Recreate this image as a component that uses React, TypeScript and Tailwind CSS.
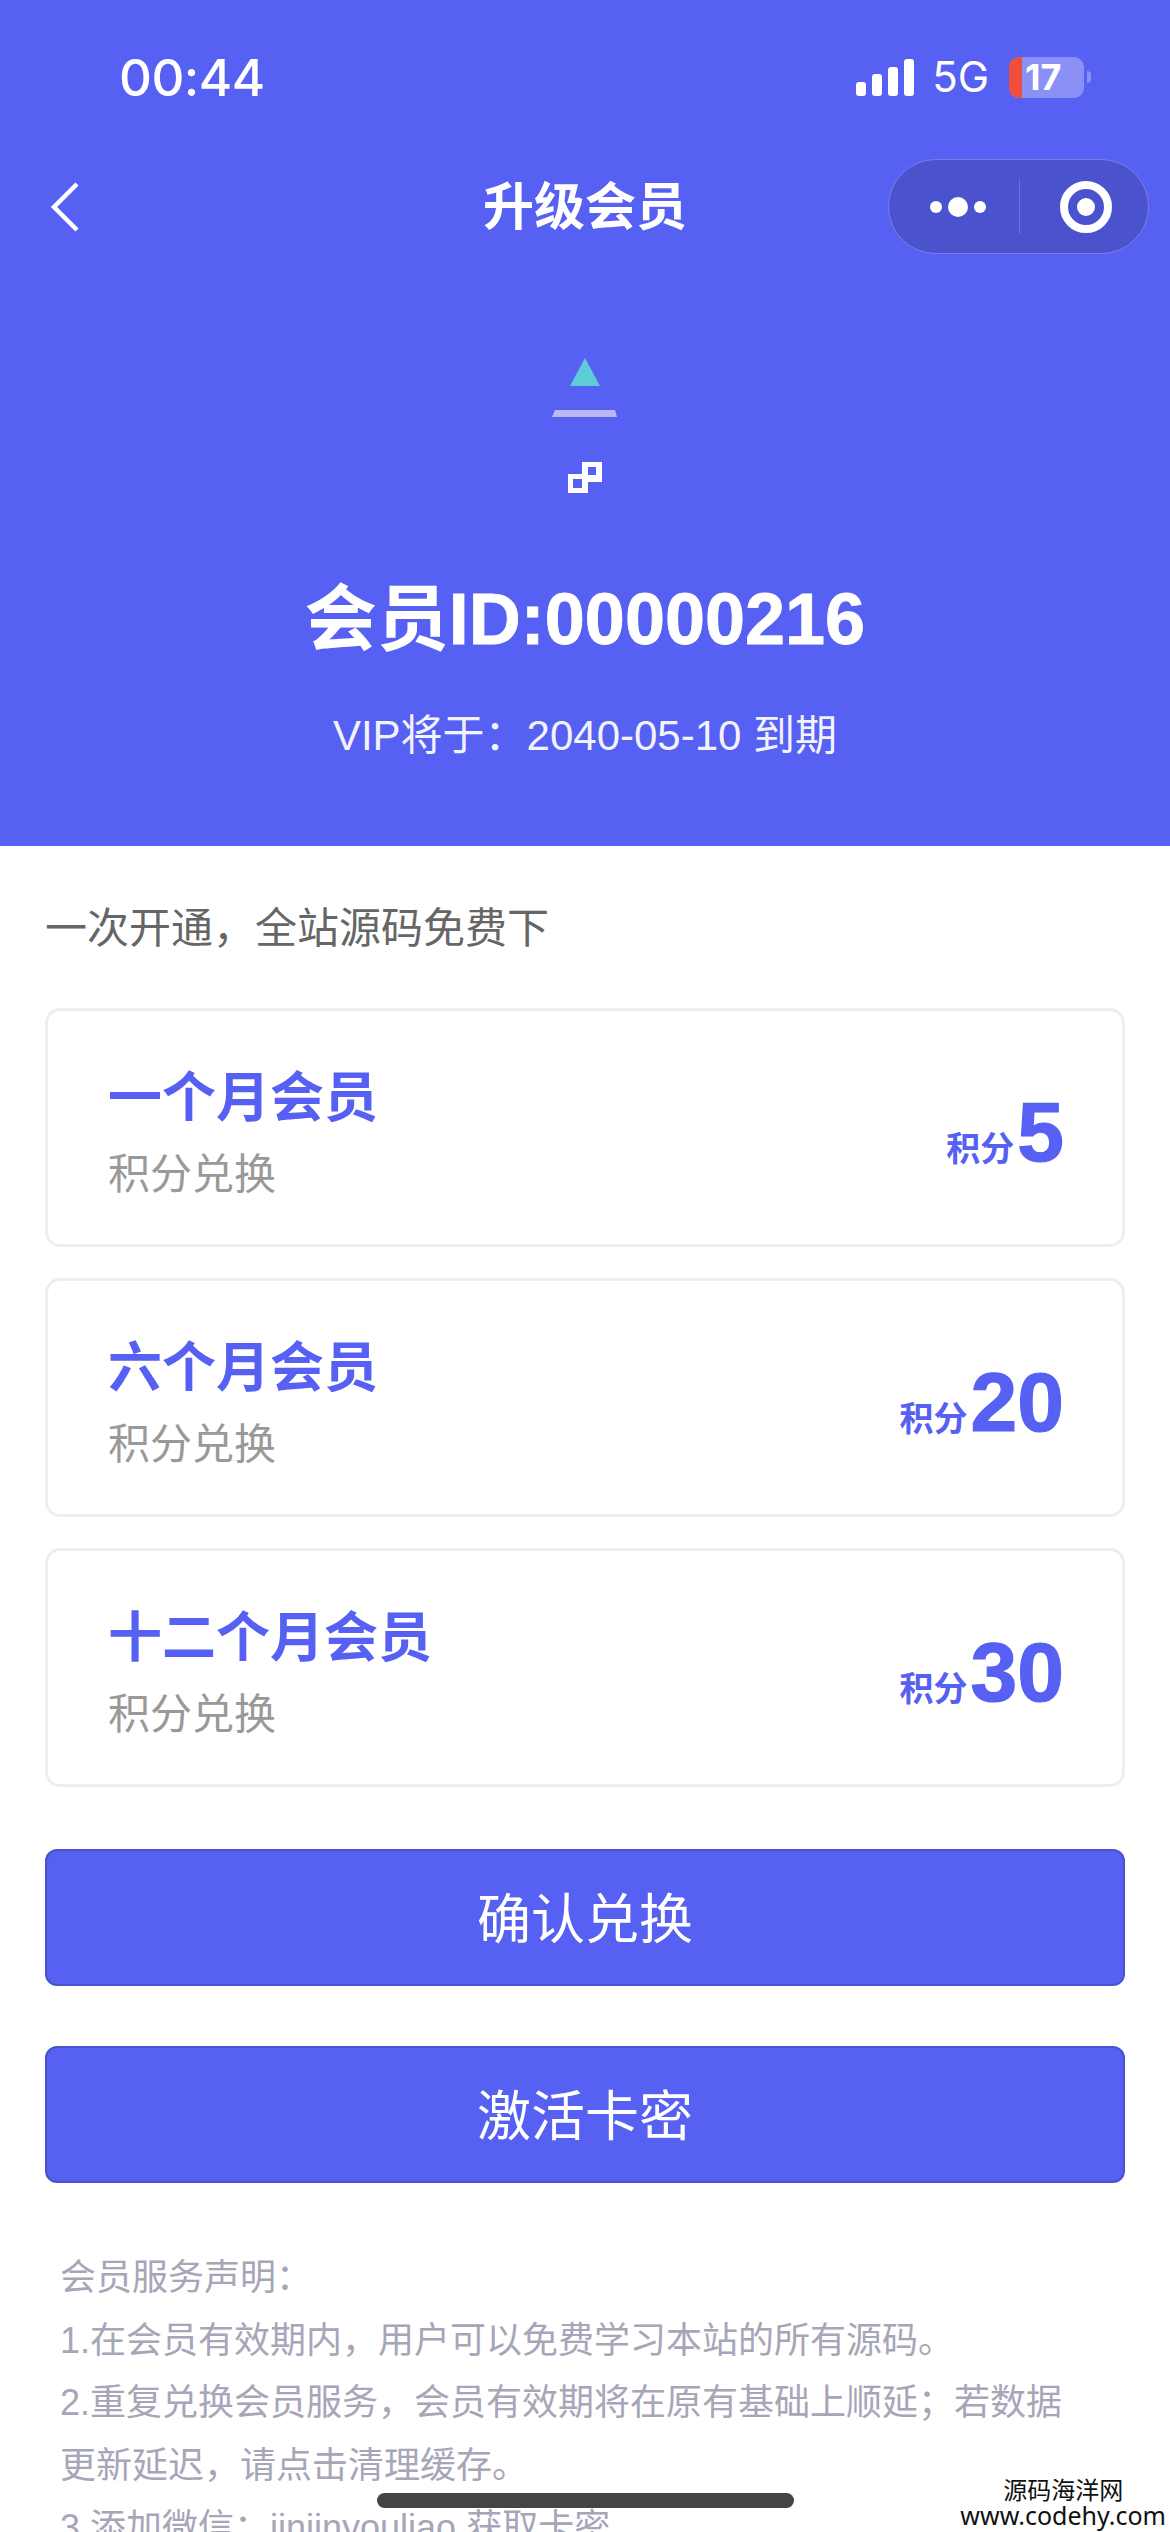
import React from 'react';

const plans = [
  { name: '一个月会员', points: '5' },
  { name: '六个月会员', points: '20' },
  { name: '十二个月会员', points: '30' },
];

const notes = [
  '会员服务声明：',
  '1.在会员有效期内，用户可以免费学习本站的所有源码。',
  '2.重复兑换会员服务，会员有效期将在原有基础上顺延；若数据',
  '更新延迟，请点击清理缓存。',
  '3.添加微信：jinjinyouliao 获取卡密',
];

const font = "font-['Liberation_Sans','Noto_Sans_CJK_SC',sans-serif]";

const StatusBar = () => (
  <div className="flex h-[159px] items-start justify-between pl-[119px] pr-[79px] pt-[51px]">
    <span className="font-['Inter',sans-serif] text-[51px] leading-[54px] font-medium tracking-[-0.5px] text-white">00:44</span>
    <div className="flex items-center pt-[5px]">
      <svg width="58" height="37" viewBox="0 0 58 37" fill="#fff">
        <rect x="0" y="23" width="10" height="14" rx="3" />
        <rect x="16" y="15" width="10" height="22" rx="3" />
        <rect x="32" y="8" width="10" height="29" rx="3" />
        <rect x="48" y="0" width="10" height="37" rx="3" />
      </svg>
      <span className="ml-[18px] mr-[20px] font-['Inter',sans-serif] text-[42px] leading-[42px] text-white">5G</span>
      <div className="flex items-center gap-[3px]">
        <div className="flex h-[41px] w-[75px] rounded-[10px] bg-[#8a90f6]">
          <div className="h-full w-[13px] rounded-l-[10px] bg-[#ee4e3a]" />
          <span className="ml-[3px] font-['Inter',sans-serif] text-[36px] leading-[41px] font-bold text-white">17</span>
        </div>
        <div className="h-[12px] w-[4px] rounded-r-full bg-[#8a90f6]" />
      </div>
    </div>
  </div>
);

const NavBar = () => (
  <div className="grid h-[95px] grid-cols-3 items-center">
    <div className="pl-[50px]">
      <svg width="30" height="50" viewBox="0 0 30 50" fill="none" stroke="#fff" strokeWidth="4.5">
        <path d="M27 2 L4 25 L27 48" />
      </svg>
    </div>
    <div className="pt-[2px] text-center text-[51px] leading-[60px] font-bold text-white">升级会员</div>
    <div className="flex justify-end pr-[21px]">
      <div className="flex h-[95px] w-[261px] items-center rounded-full border border-[#7a80e8] bg-[#4a52cd]">
        <div className="flex w-[130px] justify-center pl-[10px]">
          <svg width="58" height="20" viewBox="0 0 58 20" fill="#fff">
            <circle cx="6" cy="10" r="6" />
            <circle cx="28" cy="10" r="10" />
            <circle cx="50" cy="10" r="6" />
          </svg>
        </div>
        <div className="h-[55px] w-px bg-[#6a70e0]" />
        <div className="flex flex-1 justify-center pl-[4px]">
          <svg width="52" height="52" viewBox="0 0 52 52" fill="none">
            <circle cx="26" cy="26" r="22" stroke="#fff" strokeWidth="8" />
            <circle cx="26" cy="26" r="9" fill="#fff" />
          </svg>
        </div>
      </div>
    </div>
  </div>
);

const Logo = () => (
  <svg width="66" height="136" viewBox="0 0 66 136" fill="none" className="mx-auto">
    <path d="M33 0 L48 28 L18 28 Z" fill="#5fcbd6" />
    <path d="M3 52 L63 52 L65 59 L0 59 Z" fill="#bcb8f6" />
    <path fillRule="evenodd" d="M30 104 H50 V124 H30 Z M36 109 V117 H44 V109 Z" fill="#fff" />
    <path fillRule="evenodd" d="M16 116 H36 V135 H16 Z M21 121 V130 H30 V121 Z" fill="#fff" />
  </svg>
);

const PlanCard = ({ name, points }: { name: string; points: string }) => (
  <div className="flex h-[239px] items-center justify-between rounded-[15px] border-[3px] border-[#eeeeee] bg-white pl-[60px] pr-[58px]">
    <div className="pt-[10px]">
      <div className="text-[54px] leading-[64px] font-bold text-[#5660f2]">{name}</div>
      <div className="mt-[20px] text-[42px] leading-[50px] text-[#999999]">积分兑换</div>
    </div>
    <div className="flex items-baseline pt-[10px] text-[#5660f2]">
      <span className="mr-[3px] text-[34px] font-bold">积分</span>
      <span className="text-[84px] leading-[84px] font-bold [-webkit-text-stroke:1.2px_#5660f2]">{points}</span>
    </div>
  </div>
);

const ActionButton = ({ label }: { label: string }) => (
  <button className="h-[137px] w-full rounded-[12px] border-2 border-[#4a52cd] bg-[#5660f2] pt-[6px] text-[54px] text-white">
    {label}
  </button>
);

export default function App() {
  return (
    <div className={`relative h-[2532px] w-[1170px] overflow-hidden bg-white ${font}`}>
      <header className="h-[846px] bg-[#5660f2]">
        <StatusBar />
        <NavBar />
        <div className="mt-[104px]">
          <Logo />
        </div>
        <h1 className="mt-[80px] text-center text-[72px] leading-[90px] font-bold text-white">
          会员<span className="[-webkit-text-stroke:0.8px_#ffffff]">ID:00000216</span>
        </h1>
        <p className="mt-[47px] text-center text-[42px] leading-[50px] text-[#f2f3ff]">VIP将于：2040-05-10 到期</p>
      </header>

      <main className="px-[45px]">
        <p className="mt-[58px] text-[42px] leading-[50px] text-[#666666]">一次开通，全站源码免费下</p>
        <div className="mt-[54px] flex flex-col gap-[31px]">
          {plans.map((plan) => (
            <PlanCard key={plan.name} name={plan.name} points={plan.points} />
          ))}
        </div>
        <div className="mt-[62px] flex flex-col gap-[60px]">
          <ActionButton label="确认兑换" />
          <ActionButton label="激活卡密" />
        </div>
        <div className="mt-[64px] px-[15px] text-[36px] leading-[62.5px] text-[#a6a6b8]">
          {notes.map((line) => (
            <div key={line} className="whitespace-nowrap">{line}</div>
          ))}
        </div>
      </main>

      {/* home indicator + site watermark sit over the content */}
      <div className="absolute bottom-[24px] left-[377px] h-[15px] w-[417px] rounded-full bg-[#444444]" />
      <div className="absolute bottom-[4px] right-[4px] text-center text-[#111111]">
        <div className="text-[24px] leading-[25px]">源码海洋网</div>
        <div className="font-['Noto_Sans',sans-serif] text-[25px] leading-[25px]">www.codehy.com</div>
      </div>
    </div>
  );
}
